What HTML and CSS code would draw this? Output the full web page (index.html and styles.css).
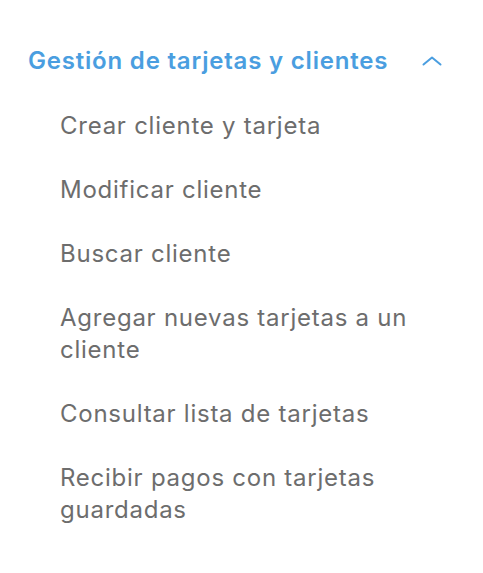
FILE: index.html
```html
<!DOCTYPE html>
<html lang="es">
<head>
<meta charset="utf-8">
<link rel="stylesheet" href="styles.css">
</head>
<body>
<nav class="menu">
  <div class="group-header">
    <span class="group-title">Gestión de tarjetas y clientes</span>
    <svg class="chevron" width="20" height="10" viewBox="0 0 20 10"><polyline points="1.5,8.5 10,1.5 18.5,8.5" fill="none" stroke="#4a9ee0" stroke-width="2" stroke-linecap="round" stroke-linejoin="round"/></svg>
  </div>
  <ul class="items">
    <li>Crear cliente y tarjeta</li>
    <li>Modificar cliente</li>
    <li>Buscar cliente</li>
    <li>Agregar nuevas tarjetas a un cliente</li>
    <li>Consultar lista de tarjetas</li>
    <li>Recibir pagos con tarjetas guardadas</li>
  </ul>
</nav>
</body>
</html>
```
FILE: styles.css
```css
html, body { margin: 0; padding: 0; background: #fff; }
body { font-family: Inter, "Open Sans", sans-serif; }
.menu { padding: 44px 0 0 28px; width: 420px; }
.group-header { display: flex; align-items: center; justify-content: space-between; height: 32px; padding-right: 6px; }
.group-title { color: #4a9ee0; font-size: 24px; font-weight: 600; letter-spacing: 0.8px; }
.chevron { margin-top: 1px; }
.items { list-style: none; margin: 0; padding: 34px 0 0 32px; display: flex; flex-direction: column; gap: 32px; }
.items li { color: #6d6d6d; font-size: 24px; line-height: 32px; letter-spacing: 0.75px; max-width: 370px; }
```
